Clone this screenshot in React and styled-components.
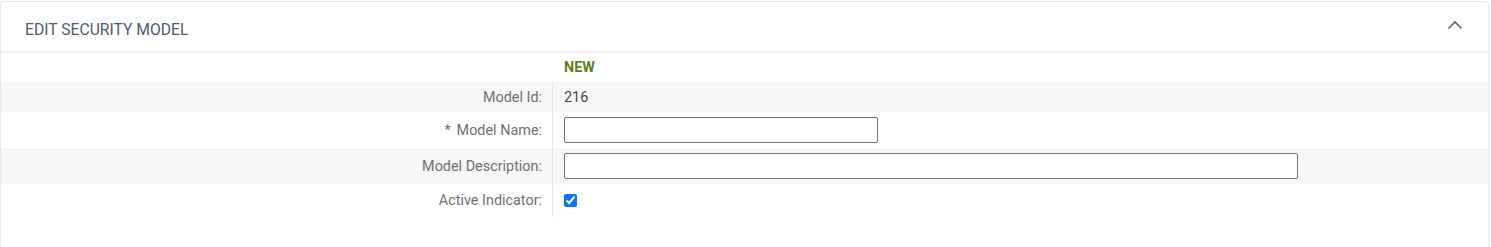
import React, { useState } from "react";
import styled, { createGlobalStyle } from "styled-components";

const GlobalStyle = createGlobalStyle`
  html, body {
    margin: 0;
    padding: 0;
    background: #ffffff;
    font-family: Roboto, "Liberation Sans", Arial, sans-serif;
  }
`;

const Page = styled.div`
  padding: 1px 2px 0 0;
  height: 246px;
  overflow: hidden;
`;

const Card = styled.section`
  border: 1px solid #e9e9e9;
  border-bottom: none;
  border-radius: 4px 4px 0 0;
  background: #fff;
  height: 260px;
`;

const Header = styled.div`
  display: flex;
  align-items: center;
  justify-content: space-between;
  box-sizing: border-box;
  height: 51px;
  padding: 5px 24px 0;
  border-bottom: 2px solid #f0f0f0;
`;

const Title = styled.h2`
  margin: 0;
  font-size: 15.7px;
  font-weight: 400;
  color: #4d5b6a;
`;

const Toggle = styled.button`
  border: none;
  background: none;
  padding: 0;
  margin: 0 1px 9px 0;
  display: flex;
  cursor: pointer;
`;

const StatusRow = styled.div`
  height: 29px;
  display: flex;
  align-items: center;
  padding-left: 563px;
  font-size: 14.4px;
  font-weight: 700;
  color: #5f7f1c;
`;

const Row = styled.div`
  display: grid;
  grid-template-columns: 552px 1fr;
  height: ${(p) => p.h}px;
  background: ${(p) => (p.shade ? "#f7f7f7" : "#fff")};
`;

const Label = styled.div`
  display: flex;
  align-items: center;
  justify-content: flex-end;
  padding-right: 10px;
  font-size: 14.4px;
  color: #707070;
  border-right: 1px solid #e3e9e9;
`;

const Required = styled.span`
  margin-right: 6px;
`;

const Value = styled.div`
  display: flex;
  align-items: center;
  padding-left: 11px;
  font-size: 14.4px;
  color: #454545;
`;

const TextInput = styled.input`
  box-sizing: border-box;
  width: ${(p) => p.w}px;
  height: 26px;
  border: 1px solid #767676;
  border-radius: 2px;
  padding: 0 6px;
  font-family: inherit;
  font-size: 14px;
  background: #fff;
  outline: none;
`;

const Check = styled.input`
  margin: 0;
  width: 13px;
  height: 13px;
  accent-color: #0a75f5;
`;

const Spacer = styled.div`
  height: 28px;
`;

const fields = [
  { label: "Model Id:", type: "text", value: "216", h: 30, shade: true },
  { label: "Model Name:", type: "input", w: 314, h: 36, required: true },
  { label: "Model Description:", type: "input", w: 734, h: 36, shade: true },
  { label: "Active Indicator:", type: "check", h: 33 },
];

export default function App() {
  const [active, setActive] = useState(true);

  return (
    <Page>
      <GlobalStyle />
      <Card>
        <Header>
          <Title>EDIT SECURITY MODEL</Title>
          <Toggle aria-label="collapse">
            <svg width="16" height="10" viewBox="0 0 16 10">
              <path d="M1.5 8.5 L8 2 L14.5 8.5" fill="none" stroke="#4d6a80" strokeWidth="1.6" />
            </svg>
          </Toggle>
        </Header>
        <StatusRow>NEW</StatusRow>
        {fields.map((f) => (
          <Row key={f.label} h={f.h} shade={f.shade}>
            <Label>
              {f.required && <Required>*</Required>}
              {f.label}
            </Label>
            <Value>
              {f.type === "text" && f.value}
              {f.type === "input" && <TextInput w={f.w} />}
              {f.type === "check" && (
                <Check
                  type="checkbox"
                  checked={active}
                  onChange={(e) => setActive(e.target.checked)}
                />
              )}
            </Value>
          </Row>
        ))}
        <Spacer />
      </Card>
    </Page>
  );
}
